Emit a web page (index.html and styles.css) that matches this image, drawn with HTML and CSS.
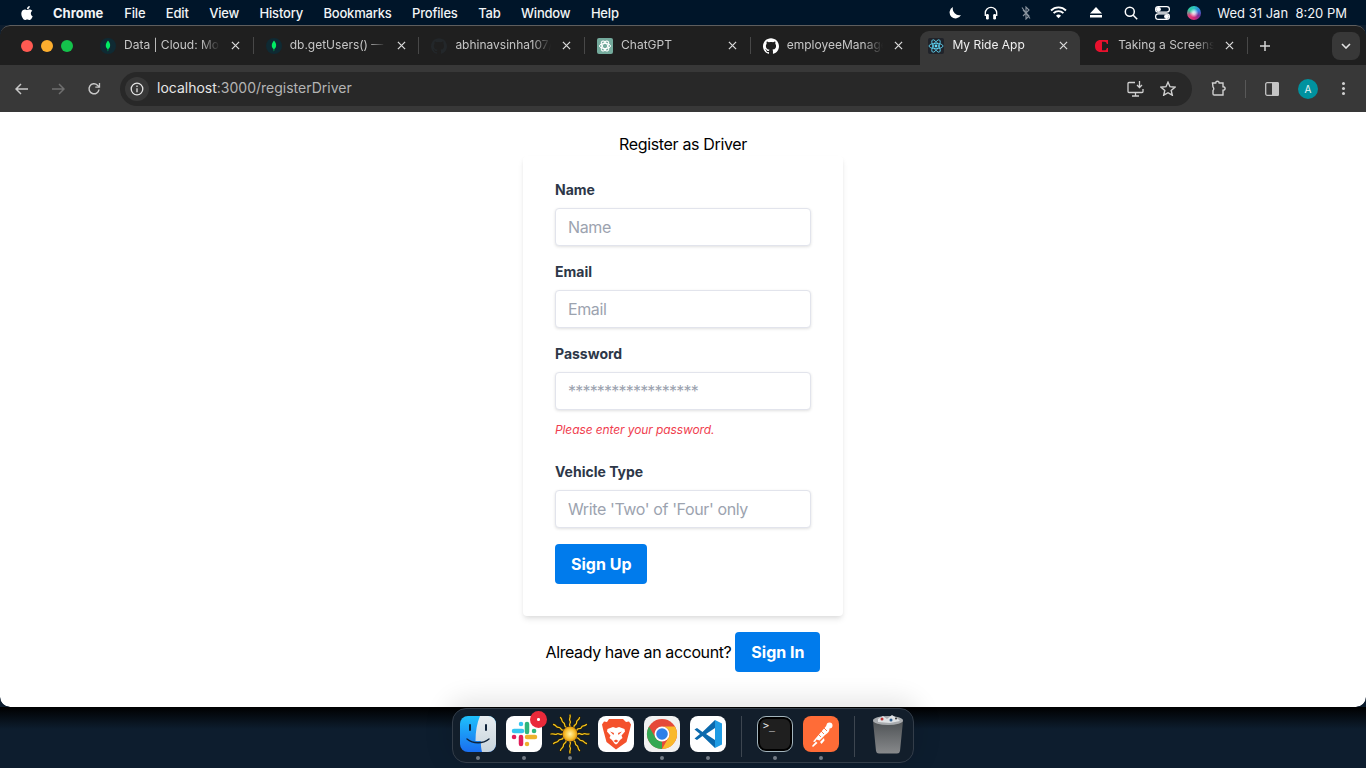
FILE: index.html
```html
<!DOCTYPE html>
<html lang="en">
<head>
    <meta charset="UTF-8">
    <title>My Ride App</title>
    <link rel="stylesheet" href="styles.css">
</head>
<body>

<svg class="sprites" width="0" height="0">
    <symbol id="close" viewBox="0 0 10 10"><path d="M1 1l8 8M9 1l-8 8" stroke="#d6d6d6" stroke-width="1.4" fill="none"/></symbol>
    <symbol id="mongo" viewBox="0 0 16 16"><circle cx="8" cy="8" r="8" fill="#0f2a33"/><path d="M8 2.6c1.7 2 2.3 3.600 2.100 5.300-.2 1.500-1.100 2.500-1.800 3l-.2 2.300h-.3l-.2-2.300c-.8-.6-1.700-1.500-1.800-3C5.700 6.200 6.400 4.600 8 2.600z" fill="#00ed64"/></symbol>
    <symbol id="github" viewBox="0 0 24 24"><path d="M12 .297c-6.630 0-12 5.373-12 12 0 5.303 3.438 9.800 8.205 11.385.6.113.82-.258.82-.577 0-.285-.01-1.040-.015-2.040-3.338.724-4.042-1.610-4.042-1.610C4.422 18.070 3.633 17.700 3.633 17.700c-1.087-.744.084-.729.084-.729 1.205.084 1.838 1.236 1.838 1.236 1.070 1.835 2.809 1.305 3.495.998.108-.776.417-1.305.76-1.605-2.665-.3-5.466-1.332-5.466-5.930 0-1.310.465-2.380 1.235-3.220-.135-.303-.54-1.523.105-3.176 0 0 1.005-.322 3.300 1.230.96-.267 1.980-.399 3-.405 1.020.006 2.040.138 3 .405 2.280-1.552 3.285-1.230 3.285-1.230.645 1.653.24 2.873.12 3.176.765.84 1.230 1.910 1.230 3.220 0 4.610-2.805 5.625-5.475 5.920.42.36.81 1.096.81 2.220 0 1.606-.015 2.896-.015 3.286 0 .315.21.69.825.57C20.565 22.092 24 17.592 24 12.297c0-6.627-5.373-12-12-12"/></symbol>
</svg>

<header class="menubar">
    <div class="menu-left">
        <svg class="apple" width="14" height="16" viewBox="0 0 24 24" fill="#fff"><path d="M12.152 6.896c-.948 0-2.415-1.078-3.960-1.040-2.040.027-3.910 1.183-4.961 3.014-2.117 3.675-.546 9.103 1.519 12.090 1.013 1.454 2.208 3.090 3.792 3.039 1.520-.065 2.090-.987 3.935-.987 1.831 0 2.350.987 3.960.948 1.637-.026 2.676-1.480 3.676-2.948 1.156-1.688 1.636-3.325 1.662-3.415-.039-.013-3.182-1.221-3.220-4.857-.026-3.040 2.480-4.494 2.597-4.559-1.429-2.090-3.623-2.324-4.390-2.376-2-.156-3.675 1.090-4.610 1.090zM15.530 3.830c.843-1.012 1.400-2.427 1.245-3.830-1.207.052-2.662.805-3.532 1.818-.78.896-1.454 2.338-1.273 3.714 1.338.104 2.715-.688 3.559-1.701"/></svg>
        <span class="app-name">Chrome</span>
        <span>File</span>
        <span>Edit</span>
        <span>View</span>
        <span>History</span>
        <span>Bookmarks</span>
        <span>Profiles</span>
        <span>Tab</span>
        <span>Window</span>
        <span>Help</span>
    </div>
    <div class="menu-right">
        <svg width="14" height="14" viewBox="0 0 14 14"><path d="M5 1a6 6 0 1 0 8 8A6.500 6.500 0 0 1 5 1z" fill="#fff"/></svg>
        <svg width="14" height="14" viewBox="0 0 14 14" fill="none" stroke="#fff" stroke-width="1.300"><path d="M1.300 10V7a5.700 5.700 0 0 1 11.400 0v3"/><rect x="2" y="8" width="2.800" height="5.500" rx="1.200" fill="#fff" stroke="none"/><rect x="9.200" y="8" width="2.800" height="5.500" rx="1.200" fill="#fff" stroke="none"/></svg>
        <svg width="12" height="14" viewBox="0 0 12 14" fill="none" stroke="#8c96a0" stroke-width="1.100"><path d="M3 4l6 6-3 3V1l3 3-6 6"/><path d="M2 1.500l8 11"/></svg>
        <svg width="17" height="13" viewBox="0 0 17 13" fill="none" stroke="#fff" stroke-width="1.800"><path d="M1 4.500a10.500 10.500 0 0 1 15 0"/><path d="M3.600 7.200a6.800 6.800 0 0 1 9.800 0"/><path d="M8.500 12.300l-2.500-2.600a3.500 3.500 0 0 1 5 0z" fill="#fff" stroke="none"/></svg>
        <svg width="12" height="11" viewBox="0 0 12 11" fill="#fff"><path d="M6 0l6 6.500H0z"/><rect y="8" width="12" height="2.500"/></svg>
        <svg width="14" height="14" viewBox="0 0 14 14" fill="none" stroke="#fff" stroke-width="1.500"><circle cx="5.800" cy="5.800" r="4.500"/><path d="M9.200 9.200l4 4"/></svg>
        <svg width="15" height="14" viewBox="0 0 15 14" fill="none" stroke="#fff" stroke-width="1.200"><rect x=".6" y=".6" width="13.800" height="5.500" rx="2.700"/><rect x=".6" y="7.900" width="13.800" height="5.500" rx="2.700"/><circle cx="3.500" cy="3.300" r="1.800" fill="#fff"/><circle cx="11.500" cy="10.600" r="1.800" fill="#fff"/></svg>
        <span class="siri"></span>
        <span class="clock">Wed 31 Jan&nbsp; 8:20 PM</span>
    </div>
</header>

<main class="window">
    <div class="tabstrip">
        <div class="traffic">
            <span class="light red"></span>
            <span class="light yellow"></span>
            <span class="light green"></span>
        </div>
        <div class="tab">
            <svg class="favicon"><use href="#mongo"/></svg>
            <span class="tab-title">Data | Cloud: MongoDB</span>
            <svg class="tab-close"><use href="#close"/></svg>
        </div>
        <div class="tab">
            <svg class="favicon"><use href="#mongo"/></svg>
            <span class="tab-title">db.getUsers() — MongoDB</span>
            <svg class="tab-close"><use href="#close"/></svg>
        </div>
        <div class="tab">
            <svg class="favicon gh-dim"><use href="#github"/></svg>
            <span class="tab-title">abhinavsinha107/employee</span>
            <svg class="tab-close"><use href="#close"/></svg>
        </div>
        <div class="tab">
            <svg class="favicon" viewBox="0 0 16 16"><rect width="16" height="16" rx="2" fill="#74aa9c"/><g fill="none" stroke="#fff" stroke-width="1"><ellipse cx="8" cy="8" rx="5.500" ry="2.600"/><ellipse cx="8" cy="8" rx="5.500" ry="2.600" transform="rotate(60 8 8)"/><ellipse cx="8" cy="8" rx="5.500" ry="2.600" transform="rotate(120 8 8)"/></g></svg>
            <span class="tab-title">ChatGPT</span>
            <svg class="tab-close"><use href="#close"/></svg>
        </div>
        <div class="tab">
            <svg class="favicon gh-white"><use href="#github"/></svg>
            <span class="tab-title">employeeManagement</span>
            <svg class="tab-close"><use href="#close"/></svg>
        </div>
        <div class="tab active">
            <svg class="favicon" viewBox="0 0 16 16"><rect width="16" height="16" rx="2" fill="#20232a"/><g fill="none" stroke="#61dafb" stroke-width=".8"><ellipse cx="8" cy="8" rx="7" ry="2.700"/><ellipse cx="8" cy="8" rx="7" ry="2.700" transform="rotate(60 8 8)"/><ellipse cx="8" cy="8" rx="7" ry="2.700" transform="rotate(120 8 8)"/></g><circle cx="8" cy="8" r="1.400" fill="#61dafb"/></svg>
            <span class="tab-title">My Ride App</span>
            <svg class="tab-close"><use href="#close"/></svg>
        </div>
        <div class="tab last">
            <svg class="favicon" viewBox="0 0 16 16"><path d="M14 2H6.500C3 2 1 4.500 1 8s2 6 5.500 6H14v-4h-1.200c-.3 1.600-1 2.300-2.300 2.300H8V3.700h2.500c1.300 0 2 .7 2.300 2.300H14z" fill="#e8112d"/></svg>
            <span class="tab-title">Taking a Screenshot</span>
            <svg class="tab-close"><use href="#close"/></svg>
        </div>
        <svg class="new-tab" width="12" height="12" viewBox="0 0 12 12"><path d="M6 1v10M1 6h10" stroke="#d6d6d6" stroke-width="1.500"/></svg>
        <div class="tab-search">
            <svg width="10" height="6" viewBox="0 0 10 6" fill="none" stroke="#e3e3e3" stroke-width="1.600"><path d="M1 1l4 4 4-4"/></svg>
        </div>
    </div>

    <div class="toolbar">
        <div class="nav-buttons">
            <svg width="14" height="12" viewBox="0 0 14 12" fill="none" stroke="#c7c7c7" stroke-width="1.500"><path d="M13 6H1.500M6 1L1 6l5 5"/></svg>
            <svg width="14" height="12" viewBox="0 0 14 12" fill="none" stroke="#6f6f6f" stroke-width="1.500"><path d="M1 6h11.500M8 1l5 5-5 5"/></svg>
            <svg width="14" height="14" viewBox="0 0 14 14" fill="none" stroke="#c7c7c7" stroke-width="1.500"><path d="M12 7.500A5 5 0 1 1 10.500 3.200L12.300 5"/><path d="M12.500 1v4.200H8.300" stroke-width="1.300"/></svg>
        </div>
        <div class="omnibox">
            <span class="site-info">
                <svg width="14" height="14" viewBox="0 0 14 14" fill="none" stroke="#e3e3e3" stroke-width="1.300"><circle cx="7" cy="7" r="5.800"/><path d="M7 6.200v4M7 3.600v1.400"/></svg>
            </span>
            <span class="url">localhost<span class="url-rest">:3000/registerDriver</span></span>
            <span class="omni-icons">
                <svg width="17" height="16" viewBox="0 0 17 16" fill="none" stroke="#d0d0d0" stroke-width="1.300"><path d="M8 1.500H2a1 1 0 0 0-1 1v8a1 1 0 0 0 1 1h13a1 1 0 0 0 1-1V8"/><path d="M5 15h7M8.500 11.500V15"/><path d="M12.500 0v6.500M10 4l2.500 2.500L15 4"/></svg>
                <svg width="16" height="15" viewBox="0 0 16 15" fill="none" stroke="#d0d0d0" stroke-width="1.400"><path d="M8 1.200l2 4.500 4.900.5-3.700 3.200 1.100 4.800L8 11.700l-4.300 2.500 1.100-4.800L1.100 6.200 6 5.700z"/></svg>
            </span>
        </div>
        <div class="toolbar-right">
            <svg class="extensions" width="17" height="17" viewBox="0 0 17 17" fill="none" stroke="#d0d0d0" stroke-width="1.400"><path d="M2.500 3h3.200C5.800 .6 9 .6 9.200 3H13v3.700c2.800.1 2.800 3.500 0 3.600V15H4.200c-.8 0-1.200-.5-1.200-1.200v-3.300c1-.7 1-2.800 0-3.500z"/></svg>
            <span class="toolbar-sep"></span>
            <svg class="side-panel" width="14" height="14" viewBox="0 0 14 14"><rect x=".7" y=".7" width="12.600" height="12.600" rx="1.500" fill="none" stroke="#c4c4c4" stroke-width="1.300"/><path d="M7 0h5.500A1.500 1.500 0 0 1 14 1.500v11a1.500 1.500 0 0 1-1.500 1.500H7z" fill="#c4c4c4"/></svg>
            <span class="avatar">A</span>
            <span class="kebab"><i></i><i></i><i></i></span>
        </div>
    </div>

    <div class="page">
        <h1 class="page-title">Register as Driver</h1>
        <form class="card">
            <label for="name">Name</label>
            <input type="text" id="name" placeholder="Name">

            <label for="email">Email</label>
            <input type="text" id="email" placeholder="Email">

            <label for="password">Password</label>
            <input type="text" id="password" class="password-input" placeholder="******************">
            <p class="error">Please enter your password.</p>

            <label for="vehicle">Vehicle Type</label>
            <input type="text" id="vehicle" placeholder="Write 'Two' of 'Four' only">

            <button type="button" class="btn">Sign Up</button>
        </form>
        <div class="signin-row">
            <span>Already have an account?</span>
            <button type="button" class="btn">Sign In</button>
        </div>
    </div>
</main>

<footer class="dock-area">
    <div class="dock">
        <div class="dock-item running">
            <svg viewBox="0 0 36 36" width="36" height="36">
                <defs>
                    <linearGradient id="finderBlue" x1="0" y1="0" x2="0" y2="1"><stop offset="0" stop-color="#1ec0fb"/><stop offset="1" stop-color="#1a6ef0"/></linearGradient>
                    <linearGradient id="finderGrey" x1="0" y1="0" x2="0" y2="1"><stop offset="0" stop-color="#e8edf0"/><stop offset="1" stop-color="#c8d4dc"/></linearGradient>
                </defs>
                <rect width="36" height="36" rx="8" fill="url(#finderBlue)"/>
                <path d="M20 0h8a8 8 0 0 1 8 8v20a8 8 0 0 1-8 8h-6c-.8-3-1.200-7-1.200-11H15.500C15.500 15 17 7 20 0z" fill="url(#finderGrey)"/>
                <path d="M10 9v5M26 9v5" stroke="#10233a" stroke-width="2" stroke-linecap="round"/>
                <path d="M7 23c6 5 16 5 22 0" fill="none" stroke="#10233a" stroke-width="1.400" stroke-linecap="round"/>
            </svg>
        </div>
        <div class="dock-item running">
            <svg viewBox="0 0 36 36" width="36" height="36">
                <rect width="36" height="36" rx="8" fill="#fff"/>
                <g stroke-width="4.500" stroke-linecap="round">
                    <path d="M8 15h8" stroke="#36c5f0"/><path d="M15 8v.1" stroke="#36c5f0"/>
                    <path d="M21 8v8" stroke="#2eb67d"/><path d="M28 15h.1" stroke="#2eb67d"/>
                    <path d="M21 21h8" stroke="#ecb22e"/><path d="M21 28v.1" stroke="#ecb22e"/>
                    <path d="M15 21v7" stroke="#e01e5a"/><path d="M8 21h.1" stroke="#e01e5a"/>
                </g>
            </svg>
            <span class="dock-badge"></span>
        </div>
        <div class="dock-item running">
            <svg viewBox="0 0 40 40" width="40" height="40">
                <defs>
                    <g id="sunRay" fill="none" stroke-linecap="round">
                        <path d="M20 12c-1.800-1.600 1.600-3.200 0-5.200s1-2.600 0-5.800" stroke="#2b1d02" stroke-width="2.400"/>
                        <path d="M20 12c-1.800-1.600 1.600-3.200 0-5.200s1-2.600 0-5.800" stroke="#f0c21d" stroke-width="1.300"/>
                    </g>
                    <radialGradient id="sunCore"><stop offset="0" stop-color="#fff2a8"/><stop offset=".7" stop-color="#f6bd2b"/><stop offset="1" stop-color="#d88c10"/></radialGradient>
                </defs>
                <use href="#sunRay"/>
                <use href="#sunRay" transform="rotate(30 20 20)"/>
                <use href="#sunRay" transform="rotate(60 20 20)"/>
                <use href="#sunRay" transform="rotate(90 20 20)"/>
                <use href="#sunRay" transform="rotate(120 20 20)"/>
                <use href="#sunRay" transform="rotate(150 20 20)"/>
                <use href="#sunRay" transform="rotate(180 20 20)"/>
                <use href="#sunRay" transform="rotate(210 20 20)"/>
                <use href="#sunRay" transform="rotate(240 20 20)"/>
                <use href="#sunRay" transform="rotate(270 20 20)"/>
                <use href="#sunRay" transform="rotate(300 20 20)"/>
                <use href="#sunRay" transform="rotate(330 20 20)"/>
                <circle cx="20" cy="20" r="7.500" fill="url(#sunCore)"/>
            </svg>
        </div>
        <div class="dock-item">
            <svg viewBox="0 0 36 36" width="36" height="36">
                <rect width="36" height="36" rx="8" fill="#fff"/>
                <path d="M11 3h14l3 3 3-.5 2 3-1 4.500-3.500 13L18 33.500l-9.500-7.500L5 13 4 8.500l2-3 3 .5z" fill="#f4512c"/>
                <path d="M9.500 13l5.500-2 3 1 3-1 5.500 2 .5 2.500-3.500 4 1 2.500-2.500 2-2.500 3.500-1.500 1-1.500-1-2.500-3.500-2.500-2 1-2.500L9 15.500z" fill="#fff"/>
                <path d="M12 15.500l4 1.500-.5 2zM24 15.500l-4 1.500.5 2zM15.500 25l2.500-1.500 2.500 1.500-2.500 1.500z" fill="#f4512c"/>
            </svg>
        </div>
        <div class="dock-item running">
            <svg viewBox="0 0 36 36" width="36" height="36">
                <rect width="36" height="36" rx="8" fill="#f1f1f1"/>
                <circle cx="18" cy="18" r="15" fill="#e5493a"/>
                <path d="M18 33A15 15 0 0 1 5 10.500L11.500 21.800A7.500 7.500 0 0 0 18 25.500z" fill="#34a853"/>
                <path d="M18 33a15 15 0 0 0 13-22.500H18a7.500 7.500 0 0 1 6.500 11.300z" fill="#f9b92a"/>
                <circle cx="18" cy="18" r="7.500" fill="#fff"/>
                <circle cx="18" cy="18" r="5.800" fill="#2f7fe8"/>
            </svg>
        </div>
        <div class="dock-item running">
            <svg viewBox="0 0 36 36" width="36" height="36">
                <rect width="36" height="36" rx="8" fill="#fff"/>
                <path d="M25 4l7 3.500v21L25 32z" fill="#1f9ce4"/>
                <path d="M25 4L12.500 16 7 12l-2.500 1.500L10 18l-5.500 4.500L7 24l5.500-4L25 32v-8l-9-6 9-6z" fill="#0a69ad"/>
            </svg>
        </div>
        <span class="dock-sep"></span>
        <div class="dock-item running">
            <div class="terminal"><span>&gt;_</span></div>
        </div>
        <div class="dock-item running">
            <svg viewBox="0 0 36 36" width="36" height="36">
                <rect width="36" height="36" rx="8" fill="#ff6c37"/>
                <g fill="#fff">
                    <circle cx="26.500" cy="9.500" r="3"/>
                    <path d="M24 9l2.500 3c.5 3-1.500 5-4.500 7l-5.500 5.500-3-1-1.500 2.500-2-.5z"/>
                    <path d="M9 30l4-4.500 1.500 1.500-4.500 4z"/>
                    <path d="M17 26l4-4 .5 2.500-3 3.500z"/>
                </g>
                <path d="M21 12l3 3M18 15l3 3M15 18l3 3" stroke="#ff6c37" stroke-width=".9"/>
            </svg>
        </div>
        <span class="dock-sep"></span>
        <div class="dock-item">
            <svg viewBox="0 0 36 40" width="36" height="40" class="trash">
                <defs><linearGradient id="bin" x1="0" y1="0" x2="0" y2="1"><stop offset="0" stop-color="#4e5255"/><stop offset="1" stop-color="#87898b"/></linearGradient></defs>
                <path d="M3 7h30l-3 30a3 3 0 0 1-3 2.500H9A3 3 0 0 1 6 37z" fill="url(#bin)"/>
                <ellipse cx="18" cy="6.500" rx="15" ry="4.500" fill="#a8abae"/>
                <path d="M8 5l5-3 4 3 5-4 6 4 2 2-10 2-12-1z" fill="#dfe2e5"/>
                <circle cx="12" cy="5" r="1.500" fill="#b33"/><circle cx="21" cy="6" r="1.500" fill="#2c5c8c"/><circle cx="26" cy="4.500" r="1" fill="#333"/>
            </svg>
        </div>
    </div>
</footer>

</body>
</html>
```

FILE: styles.css
```css
* {
    box-sizing: border-box;
}

html, body {
    margin: 0;
    height: 768px;
    overflow: hidden;
}

body {
    display: flex;
    flex-direction: column;
    font-family: Inter, "Liberation Sans", sans-serif;
    background: #0d1d2e;
}

.sprites {
    position: absolute;
}

/* mac menu bar */
.menubar {
    height: 25px;
    flex: none;
    display: flex;
    justify-content: space-between;
    align-items: center;
    padding: 0 19px 0 20px;
    background: #001529;
    color: #f2f4f6;
    font-size: 13px;
    font-weight: 500;
}

.menu-left {
    display: flex;
    align-items: center;
    gap: 20.5px;
    letter-spacing: -0.2px;
}

.apple {
    margin-right: -1.500px;
}

.app-name {
    font-weight: 700;
    letter-spacing: 0;
    margin-right: 0.500px;
}

.menu-right {
    display: flex;
    align-items: center;
    gap: 16.500px;
}

.menu-right > :nth-child(2) { margin-left: 5.500px; }
.menu-right > :nth-child(3) { margin-left: 5px; }
.menu-right > :nth-child(4) { margin-left: 2px; }
.menu-right > :nth-child(5) { margin-left: 6px; }
.menu-right > :nth-child(6) { margin-left: 5.500px; }
.menu-right > :nth-child(7) { margin-left: 1px; }

.siri {
    width: 14px;
    height: 14px;
    border-radius: 50%;
    background: radial-gradient(circle, rgba(255,255,255,0.75) 0 12%, transparent 45%),
        conic-gradient(#2cc7c0, #2d7fe0, #7a2c9a, #d42a78, #e0407a, #35c9a0, #2cc7c0);
}

.clock {
    font-weight: 400;
}

/* browser window */
.window {
    height: 682px;
    flex: none;
    display: flex;
    flex-direction: column;
    border-radius: 10px;
    overflow: hidden;
    position: relative;
    z-index: 0;
}

.tabstrip {
    height: 40px;
    flex: none;
    display: flex;
    align-items: center;
    background: #1f1f1f;
    border-top: 1px solid #5e5e5e;
    border-radius: 10px 10px 0 0;
}

.traffic {
    width: 88px;
    flex: none;
    display: flex;
    gap: 8px;
    padding-left: 21px;
}

.light {
    width: 12px;
    height: 12px;
    border-radius: 50%;
}

.red { background: #ff5a52; }
.yellow { background: #fdae2e; }
.green { background: #14c24b; }

.tab {
    width: 165.7px;
    height: 39px;
    flex: none;
    display: flex;
    align-items: center;
    padding: 0 0 0 12px;
    position: relative;
    color: #c6c6c6;
    font-size: 12px;
}

.tab::after {
    content: "";
    position: absolute;
    right: 0;
    top: 11px;
    width: 1px;
    height: 17px;
    background: #484848;
}

.tab:nth-child(6)::after,
.tab.active::after {
    display: none;
}

.tab.active {
    color: #f0f0f0;
}

.tab.active::before {
    content: "";
    position: absolute;
    left: 4px;
    right: 2px;
    top: 5px;
    bottom: 0;
    background: #383838;
    border-radius: 9px 9px 0 0;
}

.favicon {
    width: 16px;
    height: 16px;
    flex: none;
    position: relative;
}

.gh-dim {
    fill: #23272a;
}

.gh-white {
    fill: #fff;
}

.tab-title {
    width: 96px;
    margin-left: 8px;
    margin-bottom: 2px;
    flex: none;
    white-space: nowrap;
    overflow: hidden;
    position: relative;
    -webkit-mask-image: linear-gradient(to right, #000 80%, transparent 100%);
    mask-image: linear-gradient(to right, #000 80%, transparent 100%);
}

.tab-close {
    width: 9px;
    height: 9px;
    margin-left: 11px;
    flex: none;
    position: relative;
}

.new-tab {
    margin-left: 11px;
    flex: none;
}

.tab-search {
    width: 28px;
    height: 28px;
    margin-left: auto;
    margin-right: 6px;
    display: flex;
    align-items: center;
    justify-content: center;
    background: #383838;
    border-radius: 8px;
}

.toolbar {
    height: 47px;
    flex: none;
    display: flex;
    align-items: center;
    background: #383838;
}

.nav-buttons {
    width: 120px;
    flex: none;
    display: flex;
    align-items: center;
    gap: 22px;
    padding-left: 15px;
}

.omnibox {
    width: 1072px;
    height: 34px;
    flex: none;
    display: flex;
    align-items: center;
    padding: 0 16px 0 5px;
    background: #282828;
    border-radius: 17px;
    color: #e6e6e6;
    font-size: 14px;
}

.site-info {
    width: 24px;
    height: 24px;
    display: flex;
    align-items: center;
    justify-content: center;
    background: #383838;
    border-radius: 50%;
}

.url {
    margin-left: 8px;
    margin-bottom: 2px;
}

.url-rest {
    color: #b4b4b4;
}

.omni-icons {
    margin-left: auto;
    display: flex;
    align-items: center;
    gap: 16px;
}

.toolbar-right {
    flex: 1;
    display: flex;
    align-items: center;
    padding-left: 18px;
}

.toolbar-sep {
    width: 1px;
    height: 18px;
    margin: 0 19px 0 18px;
    background: #585858;
}

.avatar {
    width: 20px;
    height: 20px;
    margin-left: 19px;
    flex: none;
    display: flex;
    align-items: center;
    justify-content: center;
    border-radius: 50%;
    background: #00929f;
    color: #e8f6f7;
    font-size: 10px;
}

.kebab {
    margin-left: 24px;
    display: flex;
    flex-direction: column;
    gap: 2px;
}

.kebab i {
    width: 3px;
    height: 3px;
    border-radius: 50%;
    background: #d0d0d0;
}

/* the register page */
.page {
    flex: 1;
    display: flex;
    flex-direction: column;
    align-items: center;
    padding-top: 20px;
    background: #fff;
    color: #000;
    border-radius: 0 0 10px 10px;
}

.page-title {
    margin: 0;
    font-size: 16px;
    line-height: 24px;
    font-weight: 400;
    letter-spacing: -0.35px;
}

.card {
    width: 320px;
    padding: 24px 32px 32px;
    background: #fff;
    border-radius: 4px;
    box-shadow: 0 4px 6px -1px rgba(0,0,0,0.1), 0 2px 4px -1px rgba(0,0,0,0.06);
}

label {
    display: block;
    margin-bottom: 8px;
    color: #2d3748;
    font-size: 14px;
    line-height: 20px;
    font-weight: 700;
}

input {
    display: block;
    width: 100%;
    height: 38px;
    margin-bottom: 16px;
    padding: 8px 12px;
    border: 1px solid #e2e4ec;
    border-radius: 4px;
    box-shadow: 0 1px 3px rgba(0,0,0,0.12);
    font-family: inherit;
    font-size: 16px;
    color: #4a5568;
    outline: none;
}

input::placeholder {
    color: #9ca3af;
    letter-spacing: -0.38px;
}

input.password-input::placeholder {
    letter-spacing: -0.8px;
}

.error {
    margin: -4px 0 24px;
    color: #f03e4f;
    font-size: 12px;
    line-height: 16px;
    font-style: italic;
    letter-spacing: -0.1px;
}

.btn {
    height: 40px;
    padding: 0 16px;
    border: none;
    border-radius: 4px;
    background: #007bec;
    color: #fff;
    font-family: inherit;
    font-size: 16px;
    font-weight: 700;
}

.signin-row {
    margin-top: 16px;
    display: flex;
    align-items: center;
    gap: 4px;
    font-size: 16px;
    letter-spacing: -0.4px;
}

.signin-row .btn {
    letter-spacing: 0;
}

/* dock */
.dock-area {
    flex: 1;
    display: flex;
    justify-content: center;
    padding-top: 1px;
    position: relative;
    z-index: 1;
    background: linear-gradient(#000 0, #0d1d2e 22px);
}

.dock {
    width: 462px;
    height: 55px;
    display: flex;
    align-items: flex-start;
    gap: 10px;
    padding: 7px 0 0 7px;
    background: #121e2b;
    border: 1px solid #333d49;
    border-radius: 14px;
    box-shadow: 0 -4px 26px 4px rgba(0,0,0,0.11);
}

.dock-item {
    width: 36px;
    height: 36px;
    flex: none;
    position: relative;
    display: flex;
    align-items: center;
    justify-content: center;
}

.dock-item svg {
    flex: none;
}

.dock-item.running::after {
    content: "";
    position: absolute;
    left: 16px;
    bottom: -8px;
    width: 4px;
    height: 4px;
    border-radius: 50%;
    background: #737b85;
}

.dock-badge {
    position: absolute;
    top: -5px;
    right: -5px;
    width: 17px;
    height: 17px;
    border-radius: 50%;
    background: #ea2a3a radial-gradient(circle, #fff 0 1.200px, transparent 1.800px);
}

.dock-sep {
    width: 1px;
    height: 41px;
    flex: none;
    margin: 0 5px;
    background: #3d4650;
}

.terminal {
    width: 36px;
    height: 36px;
    padding: 3px 0 0 5px;
    background: #1f1f1f;
    border: 1.500px solid #a3b5bd;
    border-radius: 9px;
    box-shadow: inset 0 0 0 2px #000;
    color: #eee;
    font-family: "DejaVu Sans Mono", monospace;
    font-size: 10px;
    line-height: 12px;
}
```
